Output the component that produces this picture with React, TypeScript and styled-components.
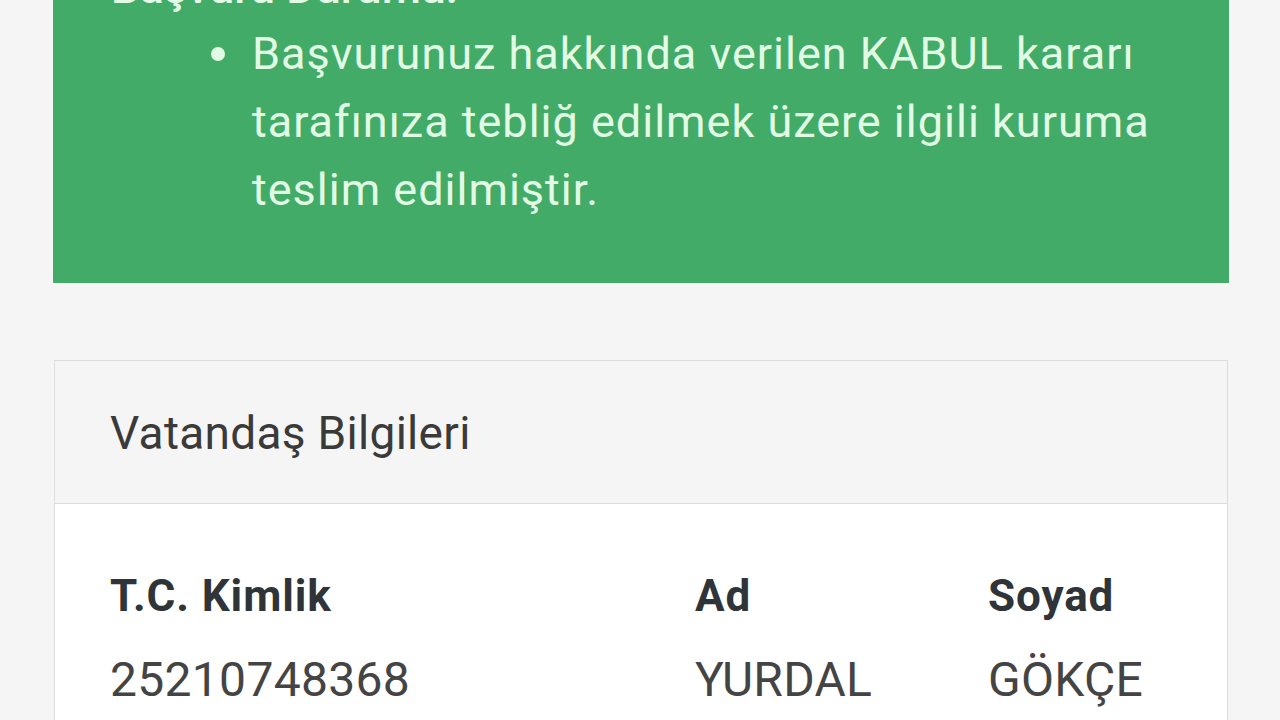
import React from "react";
import styled, { createGlobalStyle } from "styled-components";

const GlobalStyle = createGlobalStyle`
  html, body {
    margin: 0;
    padding: 0;
    background: #f5f5f5;
  }
  body {
    font-family: Roboto, "Noto Sans", "DejaVu Sans", sans-serif;
    color: #333;
  }
`;

interface Field {
  label: string;
  value: string;
}

const fields: Field[] = [
  { label: "T.C. Kimlik", value: "25210748368" },
  { label: "Ad", value: "YURDAL" },
  { label: "Soyad", value: "GÖKÇE" },
];

const App = () => {
  return (
    <>
      <GlobalStyle />
      <Page>
        <Alert>
          <AlertTitle>Başvuru Durumu:</AlertTitle>
          <AlertList>
            <AlertItem>
              Başvurunuz hakkında verilen KABUL kararı tarafınıza tebliğ edilmek
              üzere ilgili kuruma teslim edilmiştir.
            </AlertItem>
          </AlertList>
        </Alert>

        <Panel>
          <PanelHeading>Vatandaş Bilgileri</PanelHeading>
          <PanelBody>
            {fields.map((f) => (
              <FieldCol key={f.label}>
                <Label>{f.label}</Label>
                <Value>{f.value}</Value>
              </FieldCol>
            ))}
          </PanelBody>
        </Panel>
      </Page>
    </>
  );
};

const Page = styled.div`
  height: 720px;
  overflow: hidden;
  padding: 0 51px 0 53px;
  box-sizing: border-box;
`;

const Alert = styled.div`
  margin-top: -46px;
  background: #43ab68;
  color: #e2fbe5;
  padding: 0 60px 59px 40px;
`;

const AlertTitle = styled.div`
  font-size: 45px;
  font-weight: 500;
  line-height: 68px;
  padding-left: 18px;
  margin-bottom: -2px;
`;

const AlertList = styled.ul`
  margin: 0;
  padding-left: 159px;
  list-style: none;
`;

const AlertItem = styled.li`
  position: relative;
  font-size: 45px;
  line-height: 68px;
  letter-spacing: 1px;

  &::before {
    content: "";
    position: absolute;
    left: -41px;
    top: 27px;
    width: 14px;
    height: 14px;
    border-radius: 50%;
    background: #e2fbe5;
  }
`;

const Panel = styled.div`
  margin: 77px 1px 0;
  border: 1px solid #dcdcdc;
  background: #fff;
`;

const PanelHeading = styled.div`
  height: 143px;
  box-sizing: border-box;
  padding: 44px 0 0 55px;
  background: #f5f5f5;
  border-bottom: 1px solid #dcdcdc;
  font-size: 46px;
  line-height: 56px;
  letter-spacing: 0.3px;
  color: #3a3a3a;
`;

const PanelBody = styled.div`
  display: grid;
  grid-template-columns: 585px 293px 1fr;
  padding: 64px 55px 60px;
`;

const FieldCol = styled.div`
  display: flex;
  flex-direction: column;
  gap: 28px;
`;

const Label = styled.div`
  font-size: 44px;
  font-weight: 700;
  line-height: 56px;
  color: #2f3439;
  letter-spacing: 0.9px;
`;

const Value = styled.div`
  font-size: 48px;
  line-height: 56px;
  color: #444;
  letter-spacing: 0.3px;
`;

export default App;
